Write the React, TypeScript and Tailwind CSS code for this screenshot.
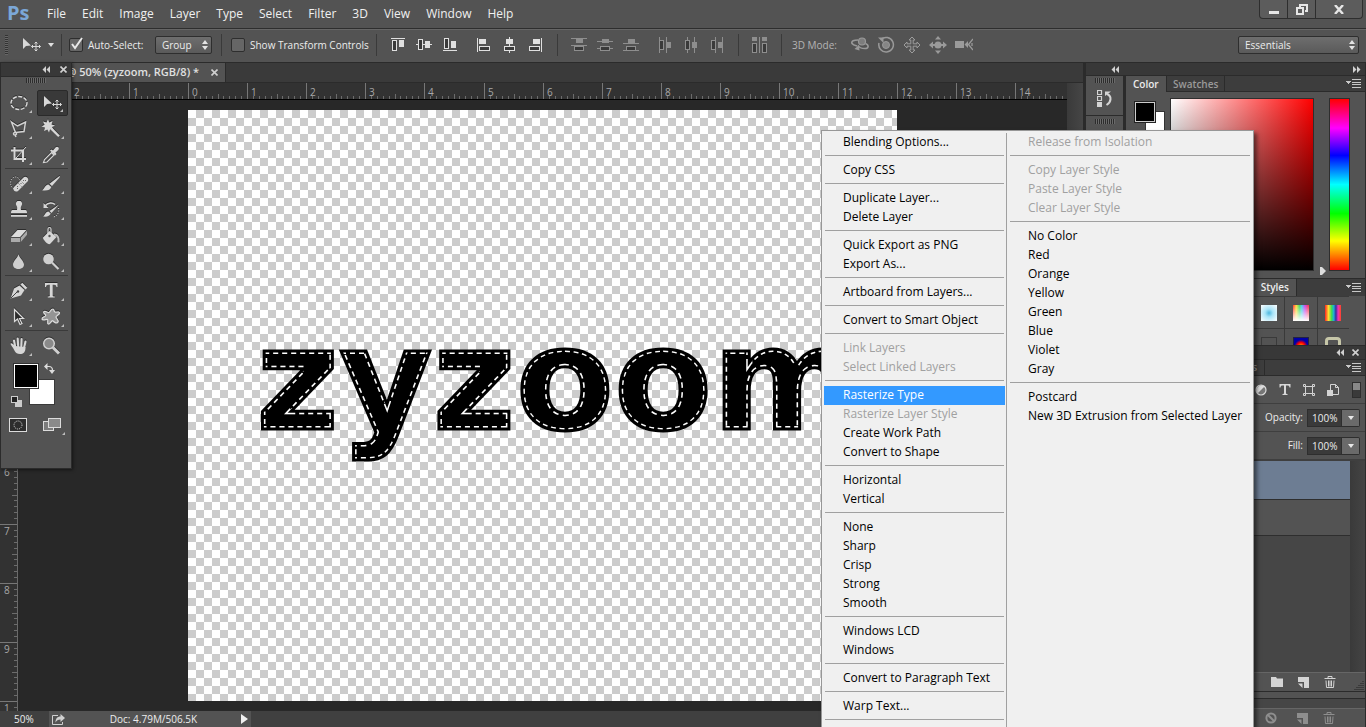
import React from "react";

type Shape = { line?: number[][]; fill?: number[][]; box?: number[][] };

const ALIGN: Shape[] = [
  { line: [[1, 1, 14, 1]], box: [[2, 3, 5, 11]], fill: [[9, 3, 5, 7]] },
  { line: [[0, 7, 16, 1]], box: [[2, 2, 5, 11]], fill: [[9, 4, 5, 7]] },
  { line: [[1, 13, 14, 1]], box: [[2, 1, 5, 11]], fill: [[9, 4, 5, 7]] },
];

const ALIGN_SIDE: Shape[] = [
  { line: [[2, 1, 1, 14]], box: [[4, 9, 11, 5]], fill: [[4, 2, 7, 5]] },
  { line: [[8, 0, 1, 16]], box: [[3, 9, 11, 5]], fill: [[5, 2, 7, 5]] },
  { line: [[14, 1, 1, 14]], box: [[2, 9, 11, 5]], fill: [[6, 2, 7, 5]] },
];

const SPREAD: Shape[] = [
  { line: [[0, 1, 16, 1], [0, 8, 16, 1]], box: [[3, 9, 10, 5]], fill: [[5, 2, 7, 4]] },
  { line: [[0, 4, 16, 1], [0, 11, 16, 1]], box: [[3, 9, 10, 5]], fill: [[5, 2, 7, 4]] },
  { line: [[0, 6, 16, 1], [0, 13, 16, 1]], box: [[3, 9, 10, 5]], fill: [[5, 2, 7, 4]] },
];

const SPREAD_SIDE: Shape[] = [
  { line: [[2, 0, 1, 16], [9, 0, 1, 16]], box: [[2, 3, 5, 10]], fill: [[9, 5, 5, 6]] },
  { line: [[4, 0, 1, 16], [11, 0, 1, 16]], box: [[2, 3, 5, 10]], fill: [[9, 5, 5, 6]] },
  { line: [[6, 0, 1, 16], [13, 0, 1, 16]], box: [[2, 3, 5, 10]], fill: [[9, 5, 5, 6]] },
];

const AUTO: Shape[] = [
  {
    line: [[7, 0, 1, 16]],
    box: [[0, 6, 5, 10], [10, 6, 5, 10]],
    fill: [[0, 0, 5, 4], [10, 0, 5, 4]],
  },
];

const AlignIcon = ({ shape, dim }: { shape: Shape; dim?: boolean }) => {
  const color = dim ? "#8e8e8e" : "#e0e0e0";
  return (
    <svg width="16" height="16" shapeRendering="crispEdges">
      {shape.line?.map(([x, y, w, h], i) => (
        <rect key={i} x={x} y={y} width={w} height={h} fill={color} />
      ))}
      {shape.box?.map(([x, y, w, h], i) => (
        <rect
          key={i}
          x={x + 0.5}
          y={y + 0.5}
          width={w - 1}
          height={h - 1}
          fill="#3a3a3a"
          stroke={color}
        />
      ))}
      {shape.fill?.map(([x, y, w, h], i) => (
        <rect key={i} x={x} y={y} width={w} height={h} fill={color} />
      ))}
    </svg>
  );
};

const AlignGroup = ({ shapes, dim, label }: { shapes: Shape[]; dim?: boolean; label: string }) => (
  <div className="flex gap-[10px]">
    {shapes.map((shape, i) => (
      <button key={i} type="button" aria-label={`${label} ${i + 1}`}>
        <AlignIcon shape={shape} dim={dim} />
      </button>
    ))}
  </div>
);

const MoveIcon = () => (
  <svg width="20" height="16" viewBox="0 0 20 16">
    <path d="M1 1v11l3-3 5-.6z" fill="#d8d8d8" />
    <path
      d="M14 5v9M9.500 9.500h9M12.500 6.500L14 5l1.500 1.500M12.500 12.500L14 14l1.500-1.500M11 8L9.500 9.500 11 11M17 8l1.500 1.500L17 11"
      fill="none"
      stroke="#d8d8d8"
    />
  </svg>
);

const TOOLS: React.ReactNode[][] = [
  [
    <ellipse key="a" cx="10" cy="10" rx="8" ry="6.500" fill="none" stroke="#dcdcdc" strokeWidth="1.400" strokeDasharray="4 1.500" />,
    null,
    <g key="b" fill="none" stroke="#d4d4d4" strokeWidth="1.500">
      <path d="M2.500 3l6 4 8-4-1.500 9.500-8.500 1L2.500 3z" />
      <path d="M6 13.500c-2 0-2 2.500 0 2.500s2-2 .5-2.500M6 16l1 2" />
    </g>,
    <g key="c" fill="#d6d6d6">
      <path d="M7 0l1.200 3.500L11.500 2l-1 3.400L14 6.500 11 8l1.600 3.200-3.500-1L8 13.500l-1.600-3L3 12l1-3.600L.500 7.500 3.600 5.700 2 2.500l3.500.9z" />
      <path d="M9.500 10.500l1.700-1.700 7.600 7.800-1.600 1.500z" />
    </g>,
    <g key="d" fill="none" stroke="#d6d6d6" strokeWidth="2">
      <path d="M5.500 2v12H17M2 5.500h12V17" />
      <path d="M7 13l10-11" strokeWidth="1" />
    </g>,
    <g key="e">
      <path d="M2.500 17.500l1-3 7-7 2.500 2.500-7 7z" fill="none" stroke="#d6d6d6" strokeWidth="1.200" />
      <path d="M9 5.500l1.500-1 1.500 1 2.500-3c2-2 4.500.5 2.700 2.500l-2.700 2.500 1 1.600-1.500 1.500z" fill="#d6d6d6" />
    </g>,
  ],
  [
    <g key="a">
      <ellipse cx="6.500" cy="9" rx="5" ry="6" fill="none" stroke="#d6d6d6" strokeDasharray="1 1.500" />
      <path d="M5 13l9.500-9.500c2-2 6.500 1 4 4L9 17c-3 2-6-1.500-4-4z" fill="#d6d6d6" />
      <path d="M9 9l4.500 4.500M11.500 6.500l4.500 4.500" stroke="#777" strokeWidth="1" strokeDasharray="1 1" />
      <path d="M8 12.500h1M8 14.500h1M14 6.500h1M16 6.500h1M11.500 9.500h1" stroke="#666" />
    </g>,
    <g key="b" fill="#d6d6d6">
      <path d="M18.500 2c.8.500.3 1-.2 1.700L11 12 8.500 9.800z" />
      <path d="M7.500 10.500l2.800 2.400c-.8 3-4 4-9.300 3.400 2.800-1.500 2.500-5.300 6.500-5.800z" />
    </g>,
    <path key="c" d="M8.500 1h3c2 1.200 2 3.500.8 5-.6 1-.6 2.500-.3 4h4.500c1 0 1.500 1 1.500 3H2c0-2 .5-3 1.500-3H8c.3-1.500.3-3-.3-4-1.200-1.500-1.200-3.800.8-5zM2 15h16v1.800H2z" fill="#d6d6d6" />,
    <g key="d" fill="#d6d6d6">
      <path d="M18 4.500L10.500 13 8.500 11zM7.500 11.500l2.200 2c-.8 2.500-3.500 3.500-7.700 3 2.200-1.300 2-4.500 5.500-5z" />
      <path d="M4 6c3-4 8-3.500 10-1.500" fill="none" stroke="#d6d6d6" strokeWidth="1.500" />
      <path d="M2.500 3v5h5z" />
      <path d="M17.500 8c1 4-1 8-5 9" fill="none" stroke="#d6d6d6" strokeDasharray="1 1.500" />
    </g>,
    <g key="e">
      <path d="M8.500 4h9L11 11H2z" fill="#dcdcdc" />
      <path d="M2 11.800h9V16H2zM11.800 11.500L18 4.800v4L11.800 16z" fill="#aaa" />
    </g>,
    <g key="f">
      <path d="M2 11.500L8.500 5l7 6-6.500 7c-2 1-7-4-7-6.500z" fill="#d6d6d6" />
      <path d="M7 10V3c0-2 3-2 3 0v6" fill="none" stroke="#d6d6d6" strokeWidth="1.200" />
      <path d="M13 7.500c4 0 6 3 5.500 8.500-1.500 1-2.500 0-2-1.500.3-3-1-4.500-3.500-5z" fill="#bbb" />
      <circle cx="8.500" cy="10" r="1.200" fill="#555" />
    </g>,
    <path key="g" d="M9.500 2c.5 3.500 5.500 7 5.500 10.500 0 6-11 6-11 0C4 9 9 5.500 9.500 2z" fill="#cfcfcf" />,
    <g key="h">
      <circle cx="7.500" cy="7" r="5.300" fill="#cfcfcf" />
      <path d="M11 10.500l6.500 6.500" stroke="#cfcfcf" strokeWidth="2.200" />
    </g>,
  ],
  [
    <g key="a">
      <path d="M1.500 17.500L5 7.500l5.500-3 5 4.500-3.500 5.500z" fill="#d6d6d6" />
      <path d="M11.500 3.500l1.800-1.800 5 5-1.800 1.800z" fill="#d6d6d6" />
      <path d="M2 17l6-6" stroke="#444" />
      <circle cx="9" cy="10.500" r="1.200" fill="#444" />
    </g>,
    <path key="b" d="M4 2h12.500v4h-1c-.2-1.600-.8-2.300-2.500-2.300h-1.300v10.500c0 1 .3 1.300 2 1.300v1H6.800v-1c1.700 0 2-.3 2-1.300V3.700H7.500C5.800 3.700 5.200 4.400 5 6H4z" fill="#d6d6d6" />,
    <path key="c" d="M5.500 2.500v12l3-2.500 2.500 5.500 2-1-2.500-5h4z" fill="#2c2c2c" stroke="#dcdcdc" strokeWidth="1.200" />,
    <path key="d" d="M3 4.500c2-1 3.500 1.500 5 1s1.500-3.500 4-3.500c1.500 0 .5 2.500 2 3s4.500-1 4.500 1-3.500 2.500-3.500 4 3 3 2 5-3.500.5-5-1-2.500 3.500-4.500 3 0-4-1-4.500-5 1.500-5.500-.5 3.500-2 3.700-3.500S1.500 6 3 4.500z" fill="#949494" stroke="#dcdcdc" strokeWidth="1.200" />,
  ],
  [
    <g key="a">
      <path d="M6 10c-1-1.500-3.500-3.500-4.300-2.600C1 8.500 4 11 6 15.500 7 17 8 18 11 18c3.500 0 5-1.500 5.500-5.500V11z" fill="#d6d6d6" />
      <path d="M6.500 12L5 4.500M9.200 10.500L8.700 2.500M12.300 10.500l.3-7.500M15 12l1.500-6.500" stroke="#d6d6d6" strokeWidth="2.100" strokeLinecap="round" />
    </g>,
    <g key="b">
      <circle cx="8" cy="7.500" r="5.300" fill="#8a8a8a" stroke="#d0d0d0" strokeWidth="1.500" />
      <path d="M12 11.500l6 6" stroke="#cfcfcf" strokeWidth="3" />
    </g>,
  ],
];

const TOOL_NAMES = [
  ["Marquee", "Move", "Lasso", "Magic wand", "Crop", "Eyedropper"],
  ["Healing brush", "Brush", "Clone stamp", "History brush", "Eraser", "Paint bucket", "Blur", "Dodge"],
  ["Pen", "Type", "Path selection", "Custom shape"],
  ["Hand", "Zoom"],
];

const Grip = () => (
  <div className="h-[5px] w-5 bg-[repeating-linear-gradient(90deg,#2c2c2c_0_1px,#6a6a6a_1px_2px)]" />
);

const Chevrons = ({ right }: { right?: boolean }) => (
  <svg width="8" height="7" viewBox="0 0 8 7" fill="#d0d0d0" className={right ? "rotate-180" : ""}>
    <path d="M4 0v7L.500 3.500zM8 0v7L4.500 3.500z" />
  </svg>
);

const Cross = () => (
  <svg width="7" height="7" viewBox="0 0 7 7" stroke="#d0d0d0" strokeWidth="1.600">
    <path d="M.500.500l6 6M6.500.500l-6 6" />
  </svg>
);

const PanelMenu = () => (
  <svg width="15" height="9" viewBox="0 0 15 9" shapeRendering="crispEdges">
    <path d="M0 2h5L2.500 5z" fill="#c8c8c8" />
    <path d="M6 .500h9M6 3.500h9M6 5.500h9M6 8.500h9" stroke="#c8c8c8" />
  </svg>
);

const Spinner = () => (
  <svg width="6" height="10" viewBox="0 0 6 10" fill="#e4e4e4" className="pointer-events-none absolute right-1 top-1">
    <path d="M0 4l3-4 3 4zM0 6l3 4 3-4z" />
  </svg>
);

const Toolbox = () => (
  <aside className="absolute left-0 top-[62px] h-[407px] w-[72px] border border-[#2b2b2b] bg-[#535353] shadow-[1px_1px_3px_rgba(0,0,0,0.5)]">
    <div className="flex h-[14px] items-center justify-end gap-[10px] border-b border-[#2b2b2b] bg-[#383838] pr-1">
      <Chevrons />
      <Cross />
    </div>
    <div className="flex h-[13px] justify-center pt-px">
      <Grip />
    </div>
    {TOOLS.map((group, g) => (
      <div key={g} className={g ? "ml-1 mr-[3px] border-t border-[#3a3a3a] pt-[2px]" : "ml-1 mr-[3px]"}>
        <div className="grid grid-cols-2 gap-x-px">
          {group.map((icon, i) => {
            const active = g === 0 && i === 1;
            return (
              <button
                key={i}
                type="button"
                aria-label={TOOL_NAMES[g][i]}
                className={
                  active
                    ? "relative flex h-[26px] w-[31px] items-center justify-center rounded-xs border border-[#2a2a2a] bg-[#393939]"
                    : "relative flex h-[26px] w-[31px] items-center pl-1"
                }
              >
                {active ? (
                  <MoveIcon />
                ) : (
                  <svg width="20" height="20" viewBox="0 0 20 20" className="drop-shadow-[0_-1px_0_rgba(0,0,0,0.450)]">
                    {icon}
                  </svg>
                )}
                {TOOL_NAMES[g][i] !== "Zoom" && (
                  <svg width="3" height="3" className="absolute bottom-[3px] right-1">
                    <path d="M3 0v3H0z" fill="#bdbdbd" />
                  </svg>
                )}
              </button>
            );
          })}
        </div>
      </div>
    ))}
    <div className="relative mx-3 mt-1 h-11">
      <div className="absolute left-4 top-4 size-[26px] border border-[#3a3a3a] bg-white" />
      <div className="absolute left-0 top-0 size-[26px] border border-[#333] bg-white p-px">
        <div className="size-full bg-black" />
      </div>
      <svg width="11" height="11" viewBox="0 0 11 11" className="absolute right-1 top-0">
        <path d="M2 3.500h3c2 0 3.500 1.500 3.500 4" fill="none" stroke="#dcdcdc" strokeWidth="1.200" />
        <path d="M3.500 0v7L0 3.500zM5 7h6l-3 4z" fill="#dcdcdc" />
      </svg>
      <svg width="11" height="11" className="absolute bottom-0 left-[-2px]">
        <rect x="4" y="4" width="7" height="7" fill="#ccc" />
        <rect x=".5" y=".5" width="6" height="6" fill="#222" stroke="#ccc" />
      </svg>
    </div>
    <div className="flex justify-between pl-2 pr-[6px] pt-[11px]">
      <svg width="18" height="14" viewBox="0 0 18 14">
        <rect x=".5" y=".5" width="17" height="13" fill="#2d2d2d" stroke="#dcdcdc" />
        <circle cx="9" cy="7" r="4" fill="none" stroke="#dcdcdc" strokeDasharray="1 1" />
      </svg>
      <svg width="22" height="17" viewBox="0 0 22 17">
        <rect x=".5" y="3.500" width="10" height="9" fill="#7c7c7c" stroke="#dcdcdc" />
        <rect x="5.500" y=".5" width="12" height="9" fill="#8a8a8a" stroke="#dcdcdc" />
        <path d="M22 14v3h-3z" fill="#bdbdbd" />
      </svg>
    </div>
  </aside>
);

const MENUS = ["File", "Edit", "Image", "Layer", "Type", "Select", "Filter", "3D", "View", "Window", "Help"];

const TitleBar = () => (
  <header className="flex h-7 shrink-0 bg-[#535353]">
    <span className="w-10 pl-[7px] text-[20px] font-bold leading-[26px] text-[#7ba7d7]">Ps</span>
    <nav className="flex gap-4 pl-[7px] text-[12px] leading-7 text-[#f0f0f0]">
      {MENUS.map((name) => (
        <button key={name} type="button">
          {name}
        </button>
      ))}
    </nav>
    <div className="ml-auto mr-[3px] flex h-[19px] rounded-b-sm border border-t-0 border-[#2e2e2e] bg-[#5c5c5c]">
      <button type="button" aria-label="Minimize" className="flex w-7 items-end justify-center border-r border-[#2e2e2e] pb-1">
        <span className="h-[3px] w-[10px] bg-[#e6e6e6]" />
      </button>
      <button type="button" aria-label="Restore" className="flex w-7 items-center justify-center border-r border-[#2e2e2e]">
        <svg width="12" height="11" viewBox="0 0 12 11" fill="none" stroke="#e6e6e6" strokeWidth="2">
          <path d="M4 3V1h7v6H9" />
          <path d="M1 4h6v6H1z" />
        </svg>
      </button>
      <button type="button" aria-label="Close" className="flex w-[46px] items-center justify-center">
        <svg width="10" height="9" viewBox="0 0 10 9" stroke="#e6e6e6" strokeWidth="2.400">
          <path d="M1 0l8 9M9 0L1 9" />
        </svg>
      </button>
    </div>
  </header>
);

const TickBox = ({ label, checked }: { label: string; checked?: boolean }) => (
  <label className="flex items-center gap-[5px]">
    <span className="relative size-[14px]">
      <input
        type="checkbox"
        defaultChecked={checked}
        className="block size-full appearance-none rounded-xs border border-[#2e2e2e] bg-[#666]"
      />
      {checked && (
        <svg width="13" height="13" viewBox="0 0 13 13" className="absolute left-[2px] top-[-1px]">
          <path d="M1 7l3 4 7-10" fill="none" stroke="#e8e8e8" strokeWidth="2" />
        </svg>
      )}
    </span>
    {label}
  </label>
);

const OptionsBar = () => (
  <div className="flex h-[35px] shrink-0 items-center border-y border-b-[#2b2b2b] border-t-[#2e2e2e] bg-[#535353] pb-px text-[10px] text-[#ececec] shadow-[inset_0_1px_0_#666] [&>div]:flex [&>div]:h-[22px] [&>div]:items-center">
    <div className="w-[62px] gap-2 border-r border-[#3a3a3a] pl-[5px]">
      <span className="h-5 w-[3px] bg-[repeating-linear-gradient(#333_0_1px,#666_1px_2px)]" />
      <span className="flex items-center gap-[6px] pl-[6px]">
        <MoveIcon />
        <svg width="6" height="4" fill="#e0e0e0">
          <path d="M0 0h6L3 4z" />
        </svg>
      </span>
    </div>
    <div className="w-[160px] justify-between border-r border-[#3a3a3a] pl-[7px] pr-[9px]">
      <TickBox label="Auto-Select:" checked />
      <span className="relative">
        <select
          aria-label="Auto-select target"
          className="h-[18px] w-[57px] appearance-none rounded-xs border border-[#2e2e2e] bg-linear-to-b from-[#6e6e6e] to-[#5a5a5a] pl-[6px]"
        >
          <option>Group</option>
        </select>
        <Spinner />
      </span>
    </div>
    <div className="w-[155px] border-r border-[#3a3a3a] pl-[9px]">
      <TickBox label="Show Transform Controls" />
    </div>
    <div className="w-[181px] gap-[17px] border-r border-[#3a3a3a] pl-[13px]">
      <AlignGroup shapes={ALIGN} label="Align vertical" />
      <AlignGroup shapes={ALIGN_SIDE} label="Align horizontal" />
    </div>
    <div className="w-[181px] gap-[18px] border-r border-[#3a3a3a] pl-[13px]">
      <AlignGroup shapes={SPREAD} dim label="Distribute vertical" />
      <AlignGroup shapes={SPREAD_SIDE} dim label="Distribute horizontal" />
    </div>
    <div className="w-[43px] border-r border-[#3a3a3a] pl-[13px]">
      <AlignGroup shapes={AUTO} dim label="Auto-align" />
    </div>
    <div className="gap-2 pl-[10px]">
      <span className="w-[51px] text-[#b4b4b4]">3D Mode:</span>
      <svg width="18" height="18" viewBox="0 0 18 18">
        <circle cx="11" cy="5.500" r="3.500" fill="#7d7d7d" stroke="#999" strokeWidth="1.200" />
        <path d="M7 4C3 4 0 5 1 7.500c1 1.500 3 2 5 2.500M14.500 7.500c4 1.500 3 5-.5 5-3 0-6-1-7-3" fill="none" stroke="#999" strokeWidth="1.600" />
        <path d="M3.500 13l4.500-4 .5 5.500z" fill="#999" />
      </svg>
      <svg width="18" height="18" viewBox="0 0 18 18">
        <circle cx="9" cy="9" r="3.500" fill="#858585" stroke="#999" />
        <path d="M4 3.500a7.300 7.300 0 1 1-2 3.500" fill="none" stroke="#999" strokeWidth="1.500" />
        <path d="M1 1.500h5.500V7z" fill="#999" />
      </svg>
      <svg width="18" height="18" viewBox="0 0 18 18">
        <path
          d="M9 1l3 3h-1.800v3.800H14V6l3 3-3 3v-1.800h-3.800V14H12l-3 3-3-3h1.800v-3.800H4V12L1 9l3-3v1.800h3.800V4H6z"
          fill="#555"
          stroke="#9c9c9c"
        />
      </svg>
      <svg width="18" height="18" viewBox="0 0 18 18" fill="#9a9a9a">
        <circle cx="9" cy="9" r="3.500" />
        <path d="M9 0l3 3.500H6zM9 18l3-3.500H6zM0 9l4-3.500v2.500h10V5.500L18 9l-4 3.500V10H4v2.500z" />
      </svg>
      <svg width="18" height="18" viewBox="0 0 18 18" fill="#9a9a9a">
        <path d="M0 5h9v7H0zM9.500 8.500L13 5v7z" />
        <path d="M18 3l-4.500 5.500L18 14M17 7v3" fill="none" stroke="#9a9a9a" strokeWidth="1.300" />
      </svg>
    </div>
    <div className="ml-auto pr-[7px]">
      <span className="relative">
        <select
          aria-label="Workspace"
          className="h-[18px] w-[121px] appearance-none rounded-xs border border-[#2e2e2e] bg-linear-to-b from-[#6e6e6e] to-[#5a5a5a] pl-[6px]"
        >
          <option>Essentials</option>
        </select>
        <Spinner />
      </span>
    </div>
  </div>
);

const UNIT = 59.1;
const MINOR = [1, 2, 3, 4, 5, 6, 7, 8, 9];

const TopRuler = () => (
  <svg width="100%" height="17" className="block border-b border-black bg-[#323232] text-[10px]" shapeRendering="crispEdges">
    {Array.from({ length: 17 }, (_, i) => {
      const n = i - 2;
      const x = Math.round(188 + n * UNIT);
      return (
        <g key={n}>
          <rect x={x} y="0" width="1" height="16" fill="#777" />
          <text x={x + 4} y="13" fill="#a8a8a8">
            {Math.abs(n)}
          </text>
          {MINOR.map((m) => (
            <rect key={m} x={Math.round(x + (m * UNIT) / 10)} y={m === 5 ? 11 : 13} width="1" height="5" fill="#6c6c6c" />
          ))}
        </g>
      );
    })}
  </svg>
);

const SideRuler = () => (
  <svg width="18" height="100%" className="block shrink-0 border-r border-[#6a6a6a] bg-[#323232] text-[10px]" shapeRendering="crispEdges">
    {Array.from({ length: 11 }, (_, n) => {
      const y = Math.round(10 + n * UNIT);
      return (
        <g key={n}>
          <rect x="0" y={y} width="17" height="1" fill="#777" />
          <text x="4" y={y + 11} fill="#a8a8a8">
            {n === 10 ? 1 : n}
          </text>
          {MINOR.map((m) => (
            <rect key={m} x={m === 5 ? 12 : 14} y={Math.round(y + (m * UNIT) / 10)} width="5" height="1" fill="#6c6c6c" />
          ))}
        </g>
      );
    })}
  </svg>
);

const Artwork = () => (
  <svg width="709" height="591" className="block font-['DejaVu_Sans',sans-serif] text-[143px] font-bold">
    <defs>
      <pattern id="checks" width="16" height="16" patternUnits="userSpaceOnUse">
        <rect width="16" height="16" fill="#fff" />
        <path d="M8 0h8v8H8zM0 8h8v8H0z" fill="#ccc" />
      </pattern>
      <clipPath id="inside">
        <use href="#letters" />
      </clipPath>
    </defs>
    <rect width="709" height="591" fill="url(#checks)" />
    <g stroke="#000" strokeWidth="3">
      <text id="letters" x="68" y="319">
        zyzoom
      </text>
    </g>
    {/* stitches run just inside the letter edges */}
    <g clipPath="url(#inside)" fill="none">
      <use href="#letters" stroke="#fff" strokeWidth="6" strokeDasharray="5 4" />
      <use href="#letters" stroke="#000" strokeWidth="3" />
    </g>
  </svg>
);

const DocumentArea = () => (
  <main className="flex min-w-0 flex-1 flex-col border-r-[3px] border-[#2b2b2b] bg-[#3a3a3a]">
    <div className="flex h-5 shrink-0 border-b border-[#2b2b2b] bg-[#3a3a3a]">
      <div className="flex w-[226px] items-center justify-end gap-3 border-r border-[#2b2b2b] bg-[#535353] pr-[7px] text-[11px] font-semibold text-[#e0e0e0]">
        <span className="whitespace-nowrap">@ 50% (zyzoom, RGB/8) *</span>
        <button type="button" aria-label="Close document">
          <Cross />
        </button>
      </div>
    </div>
    <div className="flex min-h-0 flex-1">
      <div className="flex min-w-0 flex-1 flex-col bg-[#282828]">
        <TopRuler />
        <div className="flex min-h-0 flex-1">
          <SideRuler />
          <div className="min-w-0 flex-1 overflow-hidden pl-[170px] pt-[10px]">
            <Artwork />
          </div>
        </div>
      </div>
      <div className="w-4 bg-linear-to-r from-[#3a3a3a] to-[#464646]" />
    </div>
    <div className="flex h-4 shrink-0 items-center bg-[#404040] text-[10px] text-[#ececec]">
      <span className="w-[49px] pl-[14px]">50%</span>
      <div className="flex h-full w-[202px] items-center justify-between bg-[#535353] px-[3px]">
        <svg width="14" height="11" viewBox="0 0 14 11">
          <path d="M6 1.500H.500v9h10V8" fill="none" stroke="#d0d0d0" />
          <path d="M8.500 0L13 4 8.500 8V5.500C6 5.500 4.500 6.500 3.500 8.500c0-4 2-6 5-6z" fill="#d0d0d0" />
        </svg>
        <span>Doc: 4.79M/506.5K</span>
        <svg width="7" height="10" fill="#f0f0f0">
          <path d="M0 0l7 5-7 5z" />
        </svg>
      </div>
    </div>
  </main>
);

const Trash = ({ dim }: { dim?: boolean }) => (
  <svg width="12" height="12" viewBox="0 0 12 12" fill="none" stroke={dim ? "#8e8e8e" : "#d4d4d4"}>
    <path d="M.500 2.500h11M4 2V.500h4V2M2 4.500l.5 7h7l.5-7M4.500 4.500v6M7.500 4.500v6M6 4.500v6" />
  </svg>
);

const NewPage = ({ dim }: { dim?: boolean }) => (
  <svg width="11" height="11" viewBox="0 0 11 11" fill={dim ? "#8e8e8e" : "#d4d4d4"}>
    <path d="M0 0h11v11H6V5H0zM0 6.500h4.500V11z" />
  </svg>
);

const ColorPanel = () => (
  <section className="h-[203px] shrink-0 border-b border-[#2b2b2b]">
    <div className="flex h-4 bg-[#3d3d3d] text-[10px] font-semibold leading-4">
      <h2 className="w-[40px] bg-[#535353] pl-[7px] text-[#ececec]">Color</h2>
      <h2 className="w-[59px] border-x border-b border-[#2b2b2b] pl-[6px] text-[#9a9a9a]">Swatches</h2>
      <div className="flex flex-1 items-center justify-end border-b border-[#2b2b2b] pr-1">
        <PanelMenu />
      </div>
    </div>
    <div className="flex pl-[9px] pt-[6px]">
      <div className="relative h-8 w-[35px]">
        <div className="absolute left-[10px] top-[13px] size-5 border border-[#333] bg-white" />
        <div className="absolute left-0 top-1 size-5 border border-[#ccc] bg-black outline outline-[#222]" />
      </div>
      <div className="h-[173px] w-[144px] border border-[#2e2e2e] bg-[linear-gradient(to_bottom,transparent,#000),linear-gradient(to_right,#fff,#f00)]" />
      <div className="relative ml-[15px] h-[173px] w-[21px] border border-[#2e2e2e] bg-[linear-gradient(#f00,#f0f_17%,#00f_33%,#0ff_50%,#0f0_67%,#ff0_83%,#f00)]">
        <svg width="6" height="8" className="absolute bottom-[-5px] left-[-10px]">
          <path d="M0 0h2l4 4-4 4H0z" fill="#ddd" />
        </svg>
      </div>
    </div>
  </section>
);

const STYLES = [
  "bg-[radial-gradient(#4fb8e0,#a8e4f8_35%,#fff)]",
  "bg-[linear-gradient(transparent,#fff),linear-gradient(90deg,#f33,#fd3_20%,#4d6_40%,#4ce_55%,#c4e_75%,#f33)]",
  "bg-[linear-gradient(90deg,#f22,#fd3_22%,#3d5_42%,#2ad_55%,#339_68%,#e3b_82%,#f42)]",
  "border border-[#3a3a3a]",
  "border border-[#224] bg-[radial-gradient(circle_at_50%_60%,#ff0,#f60_15%,#f00_35%,#00a_60%)]",
  "rounded-sm border-[3px] border-[#c6c6a8]",
];

const StylesPanel = () => (
  <section className="h-[66px] shrink-0 overflow-hidden">
    <div className="flex h-[17px] bg-[#3d3d3d] text-[10px] font-semibold leading-4">
      <h2 className="w-[171px] border-r border-[#2b2b2b] bg-[#535353] pr-[7px] text-right text-[#ececec]">Styles</h2>
      <div className="flex flex-1 items-center justify-end pr-1">
        <PanelMenu />
      </div>
    </div>
    <div className="mr-4 grid grid-cols-3 gap-px border-y border-[#3a3a3a] bg-[#3a3a3a] pl-[127px]">
      {STYLES.map((swatch, i) => (
        <div key={swatch} className={i < 3 ? "flex h-[31px] items-center justify-center bg-[#535353]" : "flex h-[31px] justify-center bg-[#535353] pt-2"}>
          <div className={`size-4 ${swatch}`} />
        </div>
      ))}
    </div>
  </section>
);

const Percent = ({ label }: { label: string }) => (
  <div className="flex h-7 items-center justify-end border-b border-[#3f3f3f] pr-[5px]">
    <label className="flex items-center gap-1">
      {label}
      <input defaultValue="100%" className="h-[18px] w-[35px] border border-[#2e2e2e] bg-[#3a3a3a] pl-1 text-[#ececec]" />
    </label>
    <button type="button" aria-label={`${label} slider`} className="flex h-[18px] w-[18px] items-center justify-center rounded-r-xs border border-l-0 border-[#2e2e2e] bg-[#6a6a6a]">
      <svg width="6" height="4" fill="#e8e8e8">
        <path d="M0 0h6L3 4z" />
      </svg>
    </button>
  </div>
);

const LayersPanel = () => (
  <section className="flex min-h-0 flex-1 flex-col border-t border-[#2b2b2b] text-[10px] text-[#ececec]">
    <div className="flex h-[14px] shrink-0 items-center justify-end gap-2 border-b border-[#2b2b2b] bg-[#383838] pr-[6px]">
      <Chevrons />
      <Cross />
    </div>
    <div className="flex h-4 shrink-0 border-b border-[#2b2b2b] bg-[#3d3d3d] text-[10px] font-semibold leading-[15px] text-[#9a9a9a]">
      <h2 className="w-[139px] border-r border-[#2b2b2b] pr-[7px] text-right">Paths</h2>
      <div className="flex flex-1 items-center justify-end pr-1">
        <PanelMenu />
      </div>
    </div>
    <div className="flex h-7 shrink-0 items-center justify-end gap-3 border-b border-[#3f3f3f] pr-1">
      <svg width="12" height="12" viewBox="0 0 12 12">
        <circle cx="6" cy="6" r="5" fill="#777" stroke="#ddd" strokeWidth="1.200" />
        <path d="M9.500 2.500a5 5 0 0 0-7 7z" fill="#ddd" />
      </svg>
      <svg width="12" height="11" viewBox="0 0 11 11" fill="#d8d8d8">
        <path d="M0 0h11v3.500h-1C9.800 2 9.200 1.500 8 1.500H6.500V9c0 .8.300 1 1.500 1v1H3v-1c1.200 0 1.500-.2 1.500-1V1.500H3C1.800 1.500 1.200 2 1 3.500H0z" />
      </svg>
      <svg width="12" height="12" viewBox="0 0 12 12" fill="none" stroke="#d4d4d4">
        <path d="M2.500 2.500h7v7h-7zM.500.500h2v2h-2zM9.500.500h2v2h-2zM.500 9.500h2v2h-2zM9.500 9.500h2v2h-2z" />
      </svg>
      <svg width="12" height="12" viewBox="0 0 12 12" fill="none" stroke="#d4d4d4">
        <path d="M3.500 6V.500h5l3 3v7H6M8.500.500v3h3" />
        <path d="M0 6h6v6H0z" fill="#d4d4d4" stroke="none" />
      </svg>
      <div className="ml-px h-4 w-[9px] border border-[#2e2e2e] bg-linear-to-b from-[#888] from-50% to-[#3a3a3a] to-50%" />
    </div>
    <div className="shrink-0">
      <Percent label="Opacity:" />
      <Percent label="Fill:" />
    </div>
    <div className="flex min-h-0 flex-1 border-t border-[#3f3f3f] bg-[#464646]">
      <div className="flex-1">
        <div className="h-[39px] border-b border-[#2e2e2e] bg-[#6d7d93]" />
        <div className="h-9 border-b border-[#2e2e2e] bg-[#535353]" />
      </div>
      <div className="w-[15px] bg-linear-to-r from-[#3a3a3a] to-[#444]" />
    </div>
    <div className="flex h-5 shrink-0 items-center gap-[15px] border-y border-b-[#2b2b2b] border-t-[#666] pl-[145px] [&>*]:shrink-0">
      <svg width="12" height="10" viewBox="0 0 12 10" fill="#d4d4d4">
        <path d="M0 0h5l1 1.500h6V10H0z" />
      </svg>
      <NewPage />
      <Trash />
      <svg width="10" height="10" className="ml-auto mr-px self-end">
        <path d="M9 0v10M7 2v8M5 4v6M3 6v4M1 8v2" stroke="#222" strokeDasharray="1 1" />
      </svg>
    </div>
    <div className="h-[6px] shrink-0" />
    <div className="h-[10px] shrink-0 border-t border-[#2b2b2b] bg-[#464646]" />
    <div className="flex h-[19px] shrink-0 items-center gap-[15px] border-t border-[#666] pl-[139px]">
      <svg width="12" height="12" viewBox="0 0 12 12" fill="none" stroke="#8e8e8e" strokeWidth="2">
        <circle cx="6" cy="6" r="4.600" />
        <path d="M3 3l6 6" />
      </svg>
      <span className="pl-[5px]">
        <NewPage dim />
      </span>
      <Trash dim />
    </div>
  </section>
);

const Docks = () => (
  <div className="flex w-[280px] shrink-0 flex-col border-r border-[#2b2b2b] bg-[#535353]">
    <div className="flex h-[13px] shrink-0 items-center justify-between border-b border-[#2b2b2b] bg-[#383838] pl-[25px] pr-1">
      <Chevrons />
      <Chevrons right />
    </div>
    <div className="flex min-h-0 flex-1">
      <div className="w-10 shrink-0 border-r-[3px] border-[#2b2b2b]">
        <div className="flex h-10 flex-col items-center gap-[7px] border-b border-[#2b2b2b] pt-[2px]">
          <Grip />
          <svg width="15" height="18" viewBox="0 0 15 18" fill="none" stroke="#d4d4d4">
            <path d="M.500.500h4v4h-4zM.500 6.500h4v4h-4z" strokeWidth="1.200" />
            <path d="M0 12h5v5H0z" fill="#d4d4d4" stroke="none" />
            <path d="M10 4c5 2 4.500 8-.5 11" strokeWidth="2" />
            <path d="M8 6V1.500h6z" fill="#d4d4d4" stroke="none" />
          </svg>
        </div>
        <div className="flex justify-center pt-[3px]">
          <Grip />
        </div>
      </div>
      <div className="flex min-w-0 flex-1 flex-col">
        <ColorPanel />
        <StylesPanel />
        <LayersPanel />
      </div>
    </div>
  </div>
);

type Item = { text: string; off?: boolean; on?: boolean };

const LEFT_MENU: Item[][] = [
  [{ text: "Blending Options..." }],
  [{ text: "Copy CSS" }],
  [{ text: "Duplicate Layer..." }, { text: "Delete Layer" }],
  [{ text: "Quick Export as PNG" }, { text: "Export As..." }],
  [{ text: "Artboard from Layers..." }],
  [{ text: "Convert to Smart Object" }],
  [{ text: "Link Layers", off: true }, { text: "Select Linked Layers", off: true }],
  [
    { text: "Rasterize Type", on: true },
    { text: "Rasterize Layer Style", off: true },
    { text: "Create Work Path" },
    { text: "Convert to Shape" },
  ],
  [{ text: "Horizontal" }, { text: "Vertical" }],
  [{ text: "None" }, { text: "Sharp" }, { text: "Crisp" }, { text: "Strong" }, { text: "Smooth" }],
  [{ text: "Windows LCD" }, { text: "Windows" }],
  [{ text: "Convert to Paragraph Text" }],
  [{ text: "Warp Text..." }],
  [],
];

const RIGHT_MENU: Item[][] = [
  [{ text: "Release from Isolation", off: true }],
  [
    { text: "Copy Layer Style", off: true },
    { text: "Paste Layer Style", off: true },
    { text: "Clear Layer Style", off: true },
  ],
  [
    { text: "No Color" },
    { text: "Red" },
    { text: "Orange" },
    { text: "Yellow" },
    { text: "Green" },
    { text: "Blue" },
    { text: "Violet" },
    { text: "Gray" },
  ],
  [{ text: "Postcard" }, { text: "New 3D Extrusion from Selected Layer" }],
];

const MenuColumn = ({ groups }: { groups: Item[][] }) => (
  <>
    {groups.map((group, g) => (
      <div key={g}>
        {g > 0 && <hr className="mx-px mb-[5px] mt-[3px] border-[#a0a0a0]" />}
        {group.map(({ text, off, on }) => (
          <button
            key={text}
            type="button"
            role="menuitem"
            disabled={off}
            className={`block h-[19px] w-full whitespace-nowrap pb-[2px] pl-[19px] text-left leading-[17px] ${
              on ? "bg-[#3399ff] text-white" : off ? "text-[#a0a0a0]" : "text-black"
            }`}
          >
            {text}
          </button>
        ))}
      </div>
    ))}
  </>
);

const ContextMenu = () => (
  <div
    role="menu"
    className="absolute bottom-[-4px] left-[821px] top-[130px] flex border border-[#979797] bg-[#f0f0f0] p-[2px] text-[12px] shadow-[3px_3px_4px_rgba(0,0,0,0.5)]"
  >
    <div className="w-[181px]">
      <MenuColumn groups={LEFT_MENU} />
    </div>
    <div className="ml-px w-[245px] border-l border-[#a0a0a0] pl-[2px]">
      <MenuColumn groups={RIGHT_MENU} />
    </div>
  </div>
);

const App = () => {
  return (
    <div className="relative flex h-screen flex-col overflow-hidden bg-[#535353] font-['Open_Sans',sans-serif]">
      <TitleBar />
      <OptionsBar />
      <div className="flex min-h-0 flex-1">
        <DocumentArea />
        <Docks />
      </div>
      <Toolbox />
      <ContextMenu />
    </div>
  );
};

export default App;
